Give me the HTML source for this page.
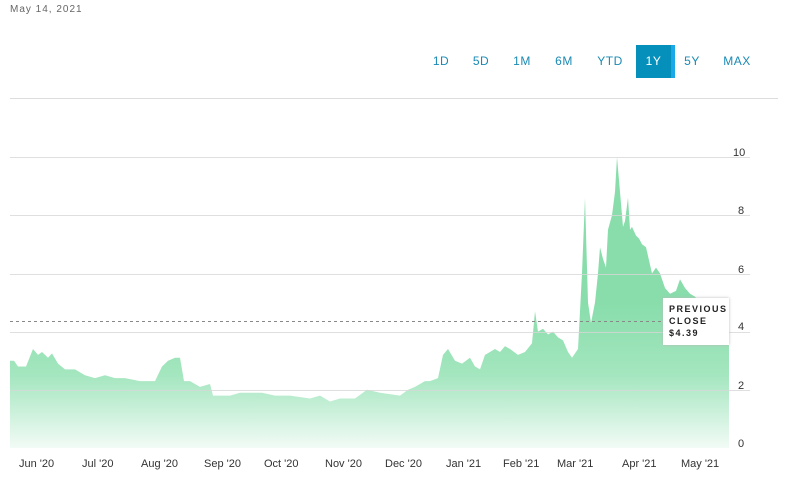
<!DOCTYPE html>
<html><head><style>
body{margin:0;width:800px;height:500px;background:#fff;font-family:"Liberation Sans",sans-serif;position:relative;overflow:hidden}
.d{position:absolute;left:10px;top:4px;font-size:10px;color:#666;letter-spacing:1px}
.b{position:absolute;top:45px;height:33px;line-height:33px;font-size:12px;color:#1a8ab5;text-align:center;letter-spacing:.5px}
.sel{background:#0590bb;color:#fff;border-right:4px solid #1aa8e8;box-sizing:border-box}
.ax{position:absolute;font-size:11px;color:#333}
.tt{position:absolute;left:663px;top:298px;width:66px;height:47px;background:#fff;box-shadow:0 0 3px #bbb;font-size:9px;letter-spacing:1.5px;line-height:12px;padding:5px 0 0 6px;box-sizing:border-box;color:#222;font-weight:bold}
</style></head><body>
<div class="d">May 14, 2021</div>
<div class="b" style="left:425px;width:32px">1D</div>
<div class="b" style="left:465px;width:32px">5D</div>
<div class="b" style="left:506px;width:32px">1M</div>
<div class="b" style="left:548px;width:32px">6M</div>
<div class="b" style="left:590px;width:40px">YTD</div>
<div class="b sel" style="left:636px;width:39px">1Y</div>
<div class="b" style="left:676px;width:32px">5Y</div>
<div class="b" style="left:718px;width:38px">MAX</div>
<svg width="800" height="500" style="position:absolute;left:0;top:0">
<defs><linearGradient id="g" gradientUnits="userSpaceOnUse" x1="0" y1="5" x2="0" y2="0"><stop offset="0" stop-color="#88ddab"/><stop offset="0.5" stop-color="#a4e6bf"/><stop offset="1" stop-color="#f2fbf6"/></linearGradient></defs>
<line x1="10" y1="98.5" x2="778" y2="98.5" stroke="#ddd"/>
<g transform="translate(0,448) scale(1,-29.1)">
<path fill="url(#g)" d="M10 0 L10 3.0 L14 3.0 L18 2.8 L26 2.8 L33 3.4 L38 3.2 L42 3.3 L48 3.1 L52 3.25 L58 2.9 L65 2.7 L75 2.7 L85 2.5 L95 2.4 L105 2.5 L115 2.4 L125 2.4 L140 2.3 L155 2.3 L162 2.8 L168 3.0 L175 3.1 L180 3.1 L184 2.3 L190 2.3 L200 2.1 L210 2.2 L213 1.8 L230 1.8 L240 1.9 L250 1.9 L262 1.9 L275 1.8 L290 1.8 L310 1.7 L320 1.8 L330 1.6 L340 1.7 L355 1.7 L367 2.0 L380 1.9 L400 1.8 L408 2.0 L415 2.1 L425 2.3 L430 2.3 L438 2.4 L443 3.2 L448 3.4 L455 3.0 L462 2.9 L470 3.1 L475 2.8 L480 2.7 L485 3.2 L490 3.3 L495 3.4 L500 3.3 L505 3.5 L510 3.4 L518 3.2 L525 3.3 L532 3.6 L535 4.7 L538 4.0 L543 4.1 L548 3.9 L553 4.0 L558 3.8 L563 3.7 L568 3.3 L572 3.1 L578 3.4 L582 6.0 L585 8.6 L588 5.0 L591 4.3 L595 5.0 L598 6.0 L600 6.9 L603 6.5 L606 6.2 L608 7.5 L612 8.0 L615 8.8 L617 10.0 L620 8.8 L623 7.6 L625 7.8 L628 8.6 L630 7.5 L632 7.6 L636 7.3 L639 7.2 L642 7.0 L646 6.9 L652 6.0 L656 6.2 L660 6.0 L665 5.5 L670 5.3 L676 5.4 L680 5.8 L685 5.5 L690 5.3 L695 5.2 L700 5.0 L705 4.9 L710 4.5 L715 4.6 L720 4.7 L729 4.6 L729 0 Z"/>
</g>
<g stroke="#d8d8d8" opacity="0.8"><line x1="10" y1="157.5" x2="750" y2="157.5"/><line x1="10" y1="215.5" x2="750" y2="215.5"/><line x1="10" y1="274.5" x2="750" y2="274.5"/><line x1="10" y1="332.5" x2="750" y2="332.5"/><line x1="10" y1="390.5" x2="750" y2="390.5"/></g>
<line x1="10" y1="321.5" x2="665" y2="321.5" stroke="#888" stroke-dasharray="3,3"/>
</svg>
<div class="tt">PREVIOUS<br>CLOSE<br>$4.39</div>
<div class="ax" style="left:733px;top:147px">10</div>
<div class="ax" style="left:738px;top:205px">8</div>
<div class="ax" style="left:738px;top:264px">6</div>
<div class="ax" style="left:738px;top:321px">4</div>
<div class="ax" style="left:738px;top:380px">2</div>
<div class="ax" style="left:738px;top:438px">0</div>
<div class="ax" style="left:19px;top:458px">Jun '20</div>
<div class="ax" style="left:82px;top:458px">Jul '20</div>
<div class="ax" style="left:141px;top:458px">Aug '20</div>
<div class="ax" style="left:204px;top:458px">Sep '20</div>
<div class="ax" style="left:264px;top:458px">Oct '20</div>
<div class="ax" style="left:325px;top:458px">Nov '20</div>
<div class="ax" style="left:385px;top:458px">Dec '20</div>
<div class="ax" style="left:446px;top:458px">Jan '21</div>
<div class="ax" style="left:503px;top:458px">Feb '21</div>
<div class="ax" style="left:557px;top:458px">Mar '21</div>
<div class="ax" style="left:622px;top:458px">Apr '21</div>
<div class="ax" style="left:681px;top:458px">May '21</div>
</body></html>
